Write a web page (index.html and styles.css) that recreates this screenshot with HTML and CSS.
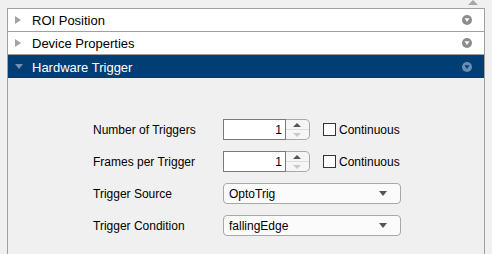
FILE: index.html
```html
<!DOCTYPE html>
<html lang="en">
<head>
  <meta charset="UTF-8">
  <title>Hardware Trigger</title>
  <link rel="stylesheet" href="styles.css">
</head>
<body>
  <!-- Top strip with scroll arrow -->
  <div class="top-strip">
    <svg class="scroll-up" width="10" height="5" viewBox="0 0 10 5"><polygon points="0,5 10,5 5,0" fill="#a6a6a6"/></svg>
  </div>

  <div class="panel">
    <div class="section-header">
      <svg class="toggle" width="6" height="8" viewBox="0 0 6 8"><polygon points="0,0 6,4 0,8" fill="#a3a3a3"/></svg>
      <span class="section-title">ROI Position</span>
      <svg class="menu-icon" width="10" height="10" viewBox="0 0 10 10"><circle cx="5" cy="5" r="5" fill="#8c8c8c"/><polygon points="2.5,3.3 7.5,3.3 5,7" fill="#fff"/></svg>
    </div>
    <div class="section-header">
      <svg class="toggle" width="6" height="8" viewBox="0 0 6 8"><polygon points="0,0 6,4 0,8" fill="#a3a3a3"/></svg>
      <span class="section-title">Device Properties</span>
      <svg class="menu-icon" width="10" height="10" viewBox="0 0 10 10"><circle cx="5" cy="5" r="5" fill="#8c8c8c"/><polygon points="2.5,3.3 7.5,3.3 5,7" fill="#fff"/></svg>
    </div>
    <div class="section-header expanded">
      <svg class="toggle" width="8" height="6" viewBox="0 0 8 6"><polygon points="0,0 8,0 4,5" fill="#7391b0"/></svg>
      <span class="section-title">Hardware Trigger</span>
      <svg class="menu-icon" width="10" height="10" viewBox="0 0 10 10"><circle cx="5" cy="5" r="5" fill="#6a8db2"/><polygon points="2.5,3.3 7.5,3.3 5,7" fill="#003e73"/></svg>
    </div>

    <div class="section-body">
      <div class="form">
        <label class="field-label">Number of Triggers</label>
        <div class="control-row">
          <div class="spinner">
            <div class="spinner-value">1</div>
            <div class="spinner-buttons">
              <span class="spin-btn"><svg width="8" height="4" viewBox="0 0 8 4"><polygon points="0,4 8,4 4,0" fill="#555"/></svg></span>
              <span class="spin-btn"><svg width="8" height="4" viewBox="0 0 8 4"><polygon points="0,0 8,0 4,4" fill="#c8c8c8"/></svg></span>
            </div>
          </div>
          <span class="checkbox"></span>
          <span class="check-label">Continuous</span>
        </div>

        <label class="field-label">Frames per Trigger</label>
        <div class="control-row">
          <div class="spinner">
            <div class="spinner-value">1</div>
            <div class="spinner-buttons">
              <span class="spin-btn"><svg width="8" height="4" viewBox="0 0 8 4"><polygon points="0,4 8,4 4,0" fill="#555"/></svg></span>
              <span class="spin-btn"><svg width="8" height="4" viewBox="0 0 8 4"><polygon points="0,0 8,0 4,4" fill="#c8c8c8"/></svg></span>
            </div>
          </div>
          <span class="checkbox"></span>
          <span class="check-label">Continuous</span>
        </div>

        <label class="field-label">Trigger Source</label>
        <div class="dropdown">
          <span>OptoTrig</span>
          <svg width="8" height="5" viewBox="0 0 8 5"><polygon points="0,0 8,0 4,5" fill="#555"/></svg>
        </div>

        <label class="field-label">Trigger Condition</label>
        <div class="dropdown">
          <span>fallingEdge</span>
          <svg width="8" height="5" viewBox="0 0 8 5"><polygon points="0,0 8,0 4,5" fill="#555"/></svg>
        </div>
      </div>
    </div>
  </div>
</body>
</html>
```

FILE: styles.css
```css
/* General Reset */
* {
  margin: 0;
  padding: 0;
  box-sizing: border-box;
}

body {
  font-family: 'Liberation Sans', Arial, sans-serif;
  background: #f0f0f0;
  color: #000;
  width: 492px;
  height: 254px;
  overflow: hidden;
}

/* Top strip */
.top-strip {
  height: 8px;
  display: flex;
  justify-content: flex-end;
  padding-right: 14px;
}

.scroll-up {
  display: block;
}

/* Accordion panel */
.panel {
  margin: 0 7px 0 7px;
  height: 246px;
  border-top: 1px solid #a0a0a0;
  border-left: 1px solid #a0a0a0;
  border-right: 1px solid #a0a0a0;
  display: flex;
  flex-direction: column;
}

.section-header {
  height: 23px;
  display: flex;
  align-items: center;
  padding: 0 12px 0 7px;
  background: #fff;
  border-bottom: 1px solid #a0a0a0;
  font-size: 13px;
}

.section-header .toggle {
  display: block;
  width: 6px;
  margin-right: 11px;
}

.section-header.expanded {
  background: #003e73;
  color: #fff;
  border-bottom: none;
}

.section-header.expanded .toggle {
  width: 8px;
  margin-right: 9px;
}

.section-title {
  flex: 1;
  padding-top: 1px;
}

.menu-icon {
  display: block;
}

/* Section content */
.section-body {
  flex: 1;
  background: #f0f0f0;
  padding: 41px 0 0 85px;
}

.form {
  display: grid;
  grid-template-columns: 130px auto;
  grid-auto-rows: 21px;
  row-gap: 11px;
  align-items: center;
  font-size: 12px;
}

.control-row {
  display: flex;
  align-items: center;
  height: 21px;
}

/* Spinner */
.spinner {
  display: flex;
  height: 21px;
}

.spinner-value {
  width: 63px;
  background: #fff;
  border: 1px solid #7a7a7a;
  text-align: right;
  padding: 3px 3px 0 0;
}

.spinner-buttons {
  width: 24px;
  display: flex;
  flex-direction: column;
  border: 1px solid #a8a8a8;
  border-left: none;
  border-radius: 0 5px 5px 0;
  background: #f6f6f6;
}

.spin-btn {
  flex: 1;
  display: flex;
  align-items: center;
  justify-content: center;
  padding-right: 2px;
}

.spin-btn:first-child {
  border-bottom: 1px solid #dcdcdc;
}

.spin-btn svg {
  display: block;
}

.checkbox {
  width: 13px;
  height: 13px;
  border: 1px solid #333;
  background: #fff;
  margin-left: 13px;
  margin-right: 3px;
}

/* Dropdown */
.dropdown {
  width: 178px;
  height: 21px;
  border: 1px solid #a8a8a8;
  border-radius: 4px;
  background: #fbfbfb;
  display: flex;
  align-items: center;
  justify-content: space-between;
  padding: 0 13px 0 5px;
}

.dropdown svg {
  display: block;
}
```
